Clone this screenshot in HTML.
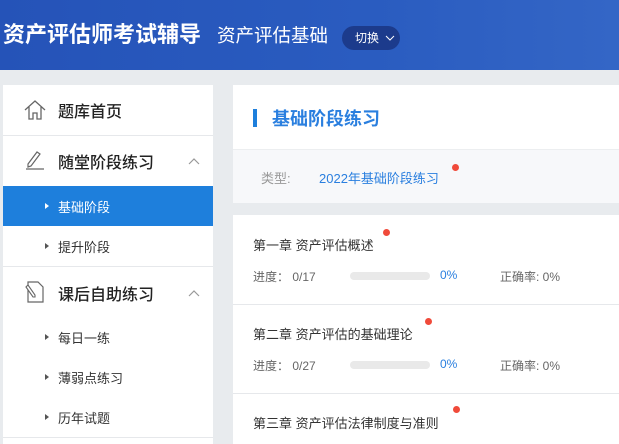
<!DOCTYPE html>
<html><head><meta charset="utf-8"><style>
*{margin:0;padding:0;box-sizing:border-box}
body{width:619px;height:444px;overflow:hidden;background:#e8ebee;font-family:"Liberation Sans","Noto Sans CJK SC",sans-serif;position:relative}
.hd{position:absolute;left:0;top:0;width:619px;height:70px;background:linear-gradient(90deg,#2553b8,#2a5cc0 60%,#3466c6)}
.hd .t1{position:absolute;left:3px;top:20px;color:#fff;font-size:22px;font-weight:bold;line-height:30px;white-space:nowrap}
.hd .t2{position:absolute;left:217px;top:22px;color:#fff;font-size:18.5px;line-height:28px;white-space:nowrap}
.hd .sw{position:absolute;left:342px;top:26px;width:58px;height:24px;border-radius:12px;background:#1c3b8c;color:#fff;font-size:12px;line-height:24px;padding-left:13px}
.side{position:absolute;left:3px;top:85px;width:210px;height:359px;background:#fff}
.big{font-size:16px;color:#222;font-weight:500}
.sub{font-size:13px;color:#333}
.div{position:absolute;left:0;width:210px;height:1px;background:#e6e8eb}
.tri{position:absolute;left:42px;width:0;height:0;border-left:4px solid #555;border-top:3.5px solid transparent;border-bottom:3.5px solid transparent}
.main{position:absolute;left:233px;top:85px;width:386px;height:359px;background:#fff}
.txt{position:absolute;white-space:nowrap}
.dot{position:absolute;width:7px;height:7px;border-radius:50%;background:#f04a3a}
.bar{position:absolute;left:117px;width:80px;height:8px;border-radius:4px;background:#e9e9e9}
</style></head><body>
<div class="hd">
<div class="t1">资产评估师考试辅导</div>
<div class="t2">资产评估基础</div>
<div class="sw">切换 <svg width="10" height="7" style="position:absolute;left:43px;top:9px"><path d="M1 1l4 4 4-4" fill="none" stroke="#fff" stroke-width="1"/></svg></div>
</div>
<div class="side">
<svg style="position:absolute;left:21px;top:15px" width="22" height="20"><path d="M1 10L11 1l10 9M5 7v12h4v-6h4v6h4V7" fill="none" stroke="#666" stroke-width="1.3"/></svg>
<div class="txt big" style="left:55px;top:13px">题库首页</div>
<div class="div" style="top:50px"></div>
<svg style="position:absolute;left:21px;top:64px" width="22" height="22"><path d="M4 15l9-12 3 2-9 12-3 1z" fill="none" stroke="#666" stroke-width="1.2"/><path d="M2 20h18" stroke="#666" stroke-width="1.3"/></svg>
<div class="txt big" style="left:55px;top:64px">随堂阶段练习</div>
<svg style="position:absolute;left:185px;top:72px" width="12" height="8"><path d="M1 7l5-5 5 5" fill="none" stroke="#999" stroke-width="1.2"/></svg>
<div style="position:absolute;left:0;top:101px;width:210px;height:40px;background:#1e7fdc"></div>
<div class="tri" style="top:118px;border-left-color:#fff"></div>
<div class="txt sub" style="left:55px;top:112px;color:#fff">基础阶段</div>
<div class="tri" style="top:158px"></div>
<div class="txt sub" style="left:55px;top:152px">提升阶段</div>
<div class="div" style="top:181px"></div>
<svg style="position:absolute;left:21px;top:196px" width="22" height="22"><path d="M4 1h10l5 5v15H4z" fill="none" stroke="#666" stroke-width="1.2"/><path d="M2 6l7 10 2 0 0-2-7-10z" fill="#fff" stroke="#666" stroke-width="1.1"/></svg>
<div class="txt big" style="left:55px;top:196px">课后自助练习</div>
<svg style="position:absolute;left:185px;top:204px" width="12" height="8"><path d="M1 7l5-5 5 5" fill="none" stroke="#999" stroke-width="1.2"/></svg>
<div class="tri" style="top:249px"></div>
<div class="txt sub" style="left:55px;top:243px">每日一练</div>
<div class="tri" style="top:289px"></div>
<div class="txt sub" style="left:55px;top:283px">薄弱点练习</div>
<div class="tri" style="top:329px"></div>
<div class="txt sub" style="left:55px;top:323px">历年试题</div>
<div class="div" style="top:352px"></div>
</div>
<div class="main">
<div style="position:absolute;left:20px;top:24px;width:4px;height:18px;background:#1e7fdc"></div>
<div class="txt" style="left:39px;top:20px;font-size:18px;font-weight:bold;color:#2a7fdf">基础阶段练习</div>
<div style="position:absolute;left:0;top:64px;width:386px;height:54px;background:#f7f8fa;border-top:1px solid #eceef0"></div>
<div class="txt" style="left:28px;top:83px;font-size:13px;color:#999">类型:</div>
<div class="txt" style="left:86px;top:83px;font-size:13px;color:#2a7fdf">2022年基础阶段练习</div>
<div class="dot" style="left:219px;top:79px"></div>
<div style="position:absolute;left:0;top:118px;width:386px;height:12px;background:#e8ebee"></div>
<div class="txt" style="left:20px;top:150px;font-size:13px;color:#333">第一章 资产评估概述</div>
<div class="dot" style="left:150px;top:144px"></div>
<div class="txt" style="left:20px;top:183px;font-size:12px;color:#666">进度： 0/17</div>
<div class="bar" style="top:187px"></div>
<div class="txt" style="left:207px;top:183px;font-size:12px;color:#2a7fdf">0%</div>
<div class="txt" style="left:267px;top:183px;font-size:12px;color:#666">正确率: 0%</div>
<div class="div" style="top:219px;width:386px"></div>
<div class="txt" style="left:20px;top:239px;font-size:13px;color:#333">第二章 资产评估的基础理论</div>
<div class="dot" style="left:192px;top:233px"></div>
<div class="txt" style="left:20px;top:272px;font-size:12px;color:#666">进度： 0/27</div>
<div class="bar" style="top:276px"></div>
<div class="txt" style="left:207px;top:272px;font-size:12px;color:#2a7fdf">0%</div>
<div class="txt" style="left:267px;top:272px;font-size:12px;color:#666">正确率: 0%</div>
<div class="div" style="top:308px;width:386px"></div>
<div class="txt" style="left:20px;top:328px;font-size:13px;color:#333">第三章 资产评估法律制度与准则</div>
<div class="dot" style="left:220px;top:321px"></div>
</div>
</body></html>
